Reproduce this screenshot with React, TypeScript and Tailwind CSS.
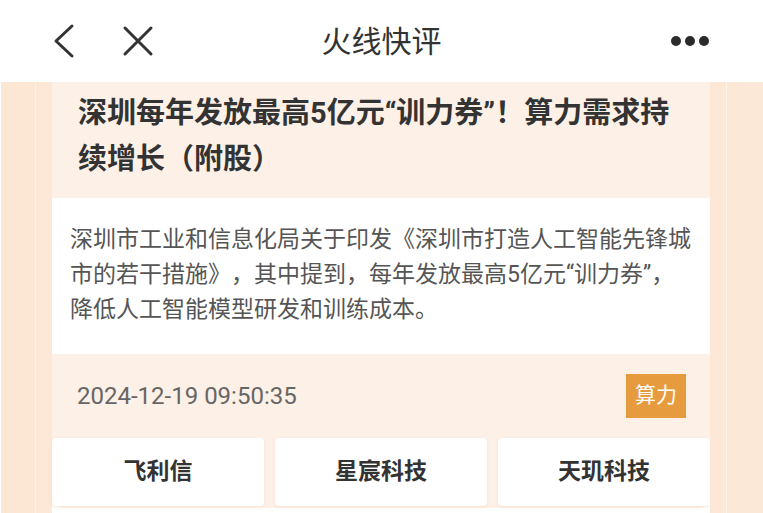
export default function App() {
  const stocks = ["飞利信", "星宸科技", "天玑科技"];
  return (
    <div className="w-[763px] h-[513px] overflow-hidden bg-white font-['Roboto','Noto_Sans_CJK_SC',sans-serif] [text-spacing-trim:space-all]">
      {/* top bar */}
      <div className="h-[82px] flex items-center px-[50px] relative">
        <svg width="26" height="36" viewBox="0 0 26 36" className="text-[#333]">
          <path d="M22 3 L6 18 L22 33" fill="none" stroke="currentColor" strokeWidth="3" strokeLinecap="round" strokeLinejoin="round" />
        </svg>
        <svg width="32" height="32" viewBox="0 0 32 32" className="ml-[46px] text-[#333]">
          <path d="M3 3 L29 29 M29 3 L3 29" fill="none" stroke="currentColor" strokeWidth="3" strokeLinecap="round" />
        </svg>
        <div className="absolute left-0 right-0 text-center text-[30px] text-[#333] pointer-events-none">火线快评</div>
        <div className="ml-auto flex gap-[4px] mr-[4px]">
          <span className="size-[10px] rounded-full bg-[#2b2b2b]" />
          <span className="size-[10px] rounded-full bg-[#2b2b2b]" />
          <span className="size-[10px] rounded-full bg-[#2b2b2b]" />
        </div>
      </div>

      {/* body */}
      <div className="flex h-[431px]">
        <div className="w-px bg-white" />
        <div className="w-[34px] bg-[#fce7d5]" />
        <div className="w-px bg-[#fef3ea]" />
        <div className="w-[16px] bg-[#fde7d6]" />

        <div className="flex-1 flex flex-col">
          <div className="bg-[#fdf0e7] rounded-b-[10px] flex flex-col">
            <h1 className="pl-[26px] pr-[20px] pt-[8px] pb-[16px] text-[29px] leading-[46px] font-bold text-[#333]">
              深圳每年发放最高5亿元“训力券”！算力需求持续增长（附股）
            </h1>
            <div className="bg-white pl-[18px] pr-[12px] pt-[24px] pb-[27px] text-[23px] leading-[35px] text-[#555]">
              深圳市工业和信息化局关于印发《深圳市打造人工智能先锋城市的若干措施》，其中提到，每年发放最高5亿元“训力券”，
              <br />
              降低人工智能模型研发和训练成本。
            </div>
            <div className="h-[84px] flex items-center justify-between pl-[25px] pr-[24px]">
              <span className="text-[24px] text-[#666]">2024-12-19 09:50:35</span>
              <span className="w-[60px] h-[44px] flex items-center justify-center bg-[#e69b3e] text-white text-[21px]">算力</span>
            </div>
            <div className="grid grid-cols-3 gap-[11px] pb-[2px]">
              {stocks.map((s) => (
                <div key={s} className="h-[68px] bg-white rounded-[4px] shadow-[0_1px_3px_rgba(230,200,170,0.35)] flex items-center justify-center text-[23px] font-bold text-[#333]">
                  {s}
                </div>
              ))}
            </div>
          </div>
        </div>

        <div className="w-[16px] bg-[#fde7d6]" />
        <div className="w-px bg-[#fef3ea]" />
        <div className="w-[36px] bg-[#fce8d6]" />
      </div>
    </div>
  );
}
